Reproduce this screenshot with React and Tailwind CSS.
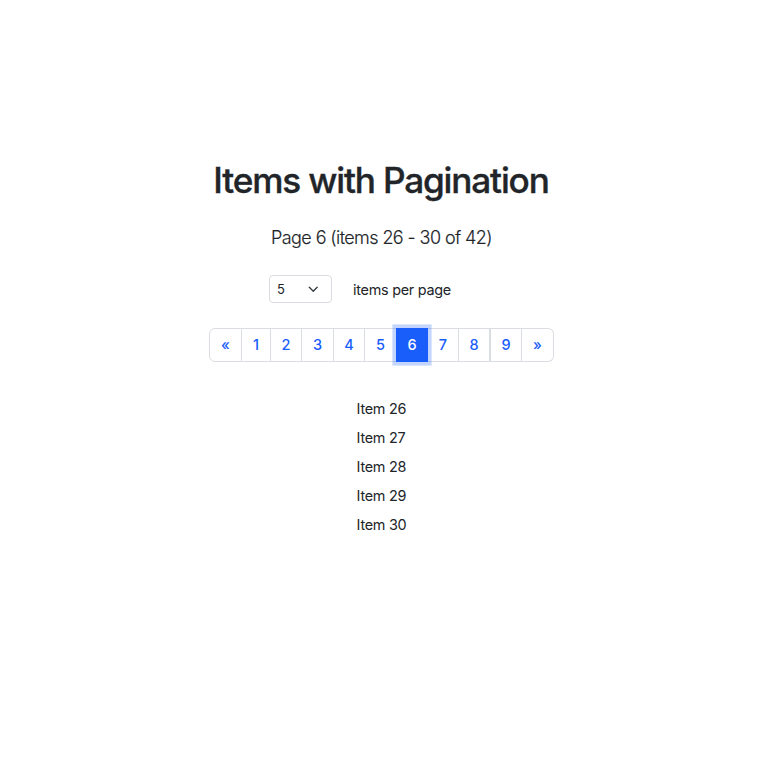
const pages = [
  { label: "«", width: "w-[33px] border-l rounded-l-[6px] border-r" },
  { label: "1", width: "w-[29px] border-r" },
  { label: "2", width: "w-[31px] border-r" },
  { label: "3", width: "w-[32px] border-r" },
  { label: "4", width: "w-[31px] border-r" },
  { label: "5", width: "w-[31px]" },
  { label: "6", width: "w-[32px]", active: true },
  { label: "7", width: "w-[31px] border-r" },
  { label: "8", width: "w-[32px] border-r-2" },
  { label: "9", width: "w-[31px] border-r" },
  { label: "»", width: "w-[32px] rounded-r-[6px] border-r" },
];

const items = [26, 27, 28, 29, 30];

function Pagination() {
  return (
    <nav className="mr-[1px] mt-[25px] flex h-[34px] w-[345px]">
      {pages.map((page) => (
        <button
          key={page.label}
          className={`flex h-[34px] items-center justify-center text-[14.5px] leading-none ${page.width} ${
            page.active
              ? "relative z-10 bg-[#195dfb] font-medium text-white shadow-[0_0_0_3.6px_rgba(25,93,251,0.26)]"
              : "border-y border-[#dadde1] bg-white font-medium text-[#195dfb]"
          }`}
        >
          {page.label}
        </button>
      ))}
    </nav>
  );
}

export default function App() {
  return (
    <main className="flex h-[759px] w-[764px] flex-col items-center bg-white pt-[158px] font-['Inter',sans-serif] text-[#212529]">
      <h1 className="mr-[2px] whitespace-nowrap text-[35.2px] font-medium leading-[44px] tracking-[-1.18px] [-webkit-text-stroke:0.35px_#212529]">
        Items with Pagination
      </h1>
      <p className="mr-[1px] mt-[22px] whitespace-nowrap text-[18px] font-light leading-[27px] tracking-[-0.59px] [-webkit-text-stroke:0.15px_#212529]">
        Page 6 (items 26 - 30 of 42)
      </p>
      <div className="mr-[44px] mt-[24px] flex h-[28px] items-center">
        <button className="flex h-[28px] w-[63px] items-center justify-between rounded-[4px] border border-[#d9dde1] pl-[7px] pr-[13px] text-[13px] leading-none">
          5
          <svg className="h-[10.5px] w-[10.5px]" viewBox="0 0 16 16" fill="none" stroke="#343a40" strokeWidth="2" strokeLinecap="round" strokeLinejoin="round">
            <path d="m2 5 6 6 6-6" />
          </svg>
        </button>
        <span className="ml-[21px] mt-[2px] whitespace-nowrap text-[14.4px] leading-[22px] tracking-[-0.26px]">items per page</span>
      </div>
      <Pagination />
      <ul className="mr-[1px] mt-[32px]">
        {items.map((item) => (
          <li key={item} className="h-[29px] whitespace-nowrap text-[14.4px] leading-[29px] tracking-[-0.26px]">
            Item {item}
          </li>
        ))}
      </ul>
    </main>
  );
}
